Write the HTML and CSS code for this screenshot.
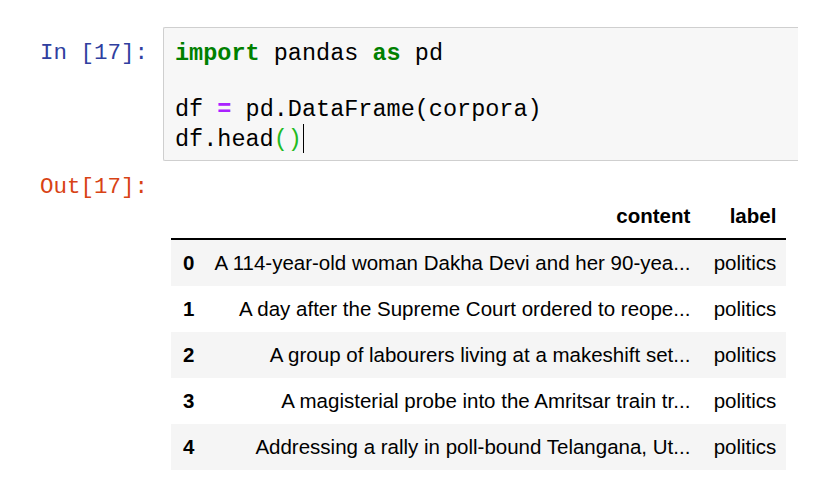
FILE: index.html
```html
<!DOCTYPE html>
<html>
<head>
<meta charset="utf-8">
<link rel="stylesheet" href="styles.css">
</head>
<body>
<div class="cell">
  <div class="row input-row">
    <div class="prompt in-prompt">In [17]:</div>
    <div class="code-box">
      <div class="code-line"><span class="kw">import</span> pandas <span class="kw">as</span> pd</div>
      <div class="code-line">&nbsp;</div>
      <div class="code-line">df <span class="op">=</span> pd.DataFrame(corpora)</div>
      <div class="code-line">df.head<span class="br">()</span><span class="cursor"></span></div>
    </div>
  </div>
  <div class="row output-row">
    <div class="prompt out-prompt">Out[17]:</div>
    <div class="output-area">
      <table class="df">
        <thead>
          <tr><th class="idx"></th><th class="content">content</th><th class="label">label</th></tr>
        </thead>
        <tbody>
          <tr><th class="idx">0</th><td class="content">A 114-year-old woman Dakha Devi and her 90-yea...</td><td class="label">politics</td></tr>
          <tr><th class="idx">1</th><td class="content">A day after the Supreme Court ordered to reope...</td><td class="label">politics</td></tr>
          <tr><th class="idx">2</th><td class="content">A group of labourers living at a makeshift set...</td><td class="label">politics</td></tr>
          <tr><th class="idx">3</th><td class="content">A magisterial probe into the Amritsar train tr...</td><td class="label">politics</td></tr>
          <tr><th class="idx">4</th><td class="content">Addressing a rally in poll-bound Telangana, Ut...</td><td class="label">politics</td></tr>
        </tbody>
      </table>
    </div>
  </div>
</div>
</body>
</html>
```
FILE: styles.css
```css
html, body {
  margin: 0;
  padding: 0;
  background: #ffffff;
}
body {
  width: 830px;
  height: 494px;
  overflow: hidden;
}
.cell {
  padding-top: 27px;
  display: flex;
  flex-direction: column;
}
.row {
  display: flex;
  flex-direction: row;
  align-items: flex-start;
}
.prompt {
  width: 148px;
  flex: 0 0 148px;
  padding-right: 15px;
  text-align: right;
  font-family: "Liberation Mono", "DejaVu Sans Mono", monospace;
  font-size: 22.5px;
  line-height: 28px;
  white-space: nowrap;
}
.in-prompt {
  color: #303f9f;
  padding-top: 12px;
}
.out-prompt {
  color: #d84315;
  padding-top: 12px;
}
.code-box {
  width: 612px;
  background: #f7f7f7;
  border: 1px solid #cfcfcf;
  border-right: none;
  border-radius: 2px 0 0 2px;
  padding: 12px 11px 8px;
  font-family: "Liberation Mono", "DejaVu Sans Mono", monospace;
  font-size: 23.5px;
  line-height: 28px;
  color: #000;
}
.code-line {
  white-space: pre;
  height: 28px;
}
.kw {
  color: #008000;
  font-weight: bold;
}
.op {
  color: #aa22ff;
  font-weight: bold;
}
.br {
  color: #22bb22;
}
.cursor {
  display: inline-block;
  width: 0;
  height: 29px;
  border-left: 1.5px solid #000;
  vertical-align: -7px;
  margin-left: 1px;
}
.output-area {
  padding-left: 8px;
  padding-top: 33px;
}
.df {
  border-collapse: collapse;
  font-family: "Liberation Sans", Arial, Helvetica, sans-serif;
  font-size: 20.5px;
  color: #000;
}
.df th, .df td {
  padding: 11px 10px;
  line-height: 24px;
  white-space: nowrap;
  text-align: right;
  font-weight: normal;
}
.df thead th {
  font-weight: bold;
  padding: 10px 10px;
  border-bottom: 2px solid #000;
}
.df th.idx {
  font-weight: bold;
  text-align: left;
  padding-left: 12px;
}
.df td.content, .df th.content {
  padding-right: 12px;
}
.df .label {
  width: 64px;
}
.df tbody tr:nth-child(odd) {
  background: #f5f5f5;
}
```
